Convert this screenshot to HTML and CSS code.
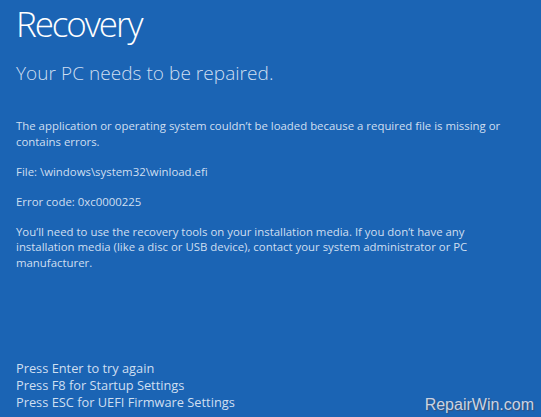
FILE: index.html
```html
<!DOCTYPE html>
<html>
<head>
<meta charset="utf-8">
<link rel="stylesheet" href="styles.css">
</head>
<body>
<div class="screen">
  <h1 class="title">Recovery</h1>
  <h2 class="subtitle">Your PC needs to be repaired.</h2>
  <div class="body">
    <p>The application or operating system couldn’t be loaded because a required file is missing or contains errors.</p>
    <p>File: \windows\system32\winload.efi</p>
    <p>Error code: 0xc0000225</p>
    <p>You’ll need to use the recovery tools on your installation media. If you don’t have any installation media (like a disc or USB device), contact your system administrator or PC manufacturer.</p>
  </div>
  <div class="keys">
    <div>Press Enter to try again</div>
    <div>Press F8 for Startup Settings</div>
    <div>Press ESC for UEFI Firmware Settings</div>
  </div>
  <div class="watermark">RepairWin.com</div>
</div>
</body>
</html>
```
FILE: styles.css
```css
html, body {
  margin: 0;
  padding: 0;
  width: 541px;
  height: 417px;
  overflow: hidden;
}
.screen {
  position: relative;
  width: 541px;
  height: 417px;
  background: #1b64b4;
  color: #cfdff1;
  font-family: "Open Sans", "Noto Sans", sans-serif;
  box-sizing: border-box;
  padding: 0 0 0 16px;
  display: flex;
  flex-direction: column;
}
.title {
  margin: 0;
  padding-top: 1px;
  font-weight: 300;
  font-size: 35px;
  letter-spacing: -2.1px;
  line-height: 46px;
  color: #ffffff;
}
.subtitle {
  margin: 13px 0 0 0;
  font-weight: 300;
  font-size: 19px;
  letter-spacing: 0.05px;
  line-height: 26px;
  color: #cfdff1;
}
.body {
  margin-top: 32px;
  width: 495px;
  font-size: 11.4px;
  line-height: 15.5px;
  font-weight: 400;
}
.body p {
  margin: 0 0 14.5px 0;
}
.keys {
  margin-top: auto;
  margin-bottom: 6px;
  font-size: 12.8px;
  line-height: 17px;
}
.watermark {
  position: absolute;
  right: 7px;
  bottom: 3px;
  font-family: "Liberation Sans", Arial, sans-serif;
  font-size: 16px;
  color: #c9d3e3;
  text-shadow: 1px 1px 1px #3a4f75;
}
```
